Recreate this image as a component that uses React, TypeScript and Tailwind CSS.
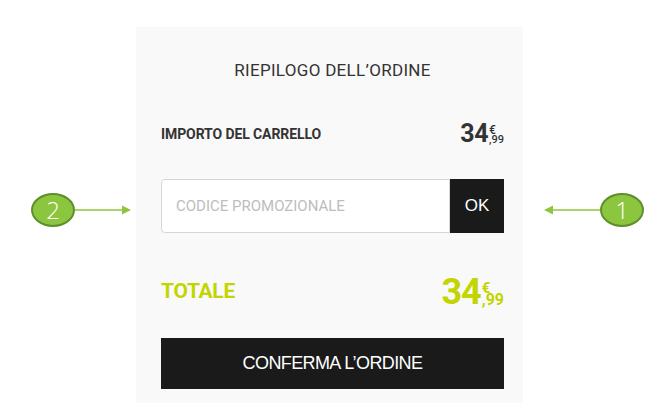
import React from "react";

function Bubble({ n }: { n: string }) {
  return (
    <div className="w-[44px] h-[34px] rounded-[50%] bg-[#8cc63e] border-2 border-[#5f8f2b] flex items-center justify-center text-white text-[24px] leading-none font-['Open_Sans',sans-serif] font-light">
      {n}
    </div>
  );
}

function Callout({ n, dir }: { n: string; dir: "left" | "right" }) {
  return (
    <div className="flex items-center">
      {dir === "right" ? (
        <>
          <Bubble n={n} />
          <svg width="57" height="12" viewBox="0 0 57 12" className="block">
            <line x1="0" y1="6" x2="49" y2="6" stroke="#8cc63e" strokeWidth="1.5" />
            <path d="M47 1.5 L56 6 L47 10.5 Z" fill="#8cc63e" />
          </svg>
        </>
      ) : (
        <>
          <svg width="57" height="12" viewBox="0 0 57 12" className="block">
            <line x1="8" y1="6" x2="57" y2="6" stroke="#8cc63e" strokeWidth="1.5" />
            <path d="M10 1.5 L1 6 L10 10.5 Z" fill="#8cc63e" />
          </svg>
          <Bubble n={n} />
        </>
      )}
    </div>
  );
}

export default function App() {
  return (
    <div className="w-[670px] h-[415px] bg-white relative font-['Roboto',sans-serif]">
      <div className="pt-[27px] pl-[136px]">
        <div className="w-[387px] h-[376px] bg-[#f9f9f9] pl-[25px] pr-[19px] flex flex-col">
          <div className="mt-[33px] h-[20px] leading-[20px] text-center text-[17px] text-[#333] tracking-[0.3px]">
            RIEPILOGO DELL’ORDINE
          </div>
          <div className="mt-[42px] h-[24px] flex items-center justify-between">
            <span className="text-[14px] font-bold text-[#333] tracking-[-0.1px]">IMPORTO DEL CARRELLO</span>
            <span className="flex items-end text-[#333] font-bold">
              <span className="text-[25px] leading-[24px] tracking-[-0.5px]">34</span>
              <span className="flex flex-col leading-[10px] ml-[1px] mb-[1px]">
                <span className="text-[12px] font-medium">€</span>
                <span className="text-[11px] font-medium">,99</span>
              </span>
            </span>
          </div>
          <div className="mt-[33px] h-[54px] flex">
            <div className="flex-1 bg-white border border-[#d6d6d6] rounded-l-[4px] flex items-center pl-[14px] text-[15px] text-[#bdbdbd]">
              CODICE PROMOZIONALE
            </div>
            <div className="w-[54px] bg-[#1a1a1a] flex items-center justify-center text-white text-[17px] font-['Liberation_Sans',sans-serif]">
              OK
            </div>
          </div>
          <div className="mt-[43px] h-[32px] flex items-center justify-between">
            <span className="text-[21px] font-bold text-[#c3d500] tracking-[-0.3px]">TOTALE</span>
            <span className="flex items-end text-[#c3d500] font-bold">
              <span className="text-[36px] leading-[32px] tracking-[-1px]">34</span>
              <span className="flex flex-col leading-[12px] ml-[1px] mb-[2px]">
                <span className="text-[15px]">€</span>
                <span className="text-[16px]">,99</span>
              </span>
            </span>
          </div>
          <div className="mt-[30px] h-[51px] bg-[#1a1a1a] flex items-center justify-center text-white text-[18px] tracking-[-0.6px] font-['Liberation_Sans',sans-serif]">
            CONFERMA L’ORDINE
          </div>
        </div>
      </div>
      <div className="absolute left-[31px] top-[193px]">
        <Callout n="2" dir="right" />
      </div>
      <div className="absolute left-[543px] top-[193px]">
        <Callout n="1" dir="left" />
      </div>
    </div>
  );
}
